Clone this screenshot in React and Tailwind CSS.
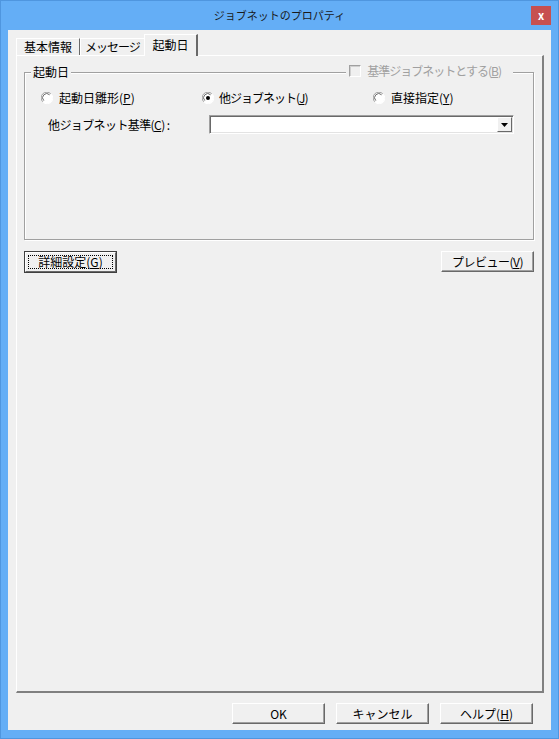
import React from 'react';

const Radio = ({ checked }) => (
    <svg width="12" height="12" viewBox="0 0 12 12" className="shrink-0">
        <circle cx="6" cy="6" r="5.5" fill="#fff" />
        <path d="M1.8 9.8 A5.2 5.2 0 0 1 9.8 1.8" stroke="#a0a0a0" strokeWidth="1" fill="none" />
        <path d="M2.8 8.6 A4 4 0 0 1 8.6 2.8" stroke="#696969" strokeWidth="1" fill="none" />
        <path d="M2.2 10.2 A5.3 5.3 0 0 0 10.2 2.2" stroke="#ffffff" strokeWidth="1" fill="none" />
        {checked && <circle cx="6" cy="6" r="2" fill="#000" />}
    </svg>
);

const Btn = ({ children, className = '' }) => (
    <div className={`flex h-[21px] items-center justify-center border border-b-[#696969] border-l-white border-r-[#696969] border-t-white bg-[#f0f0f0] text-[12px] text-black shadow-[inset_-1px_-1px_0_#a0a0a0] ${className}`}>
        {children}
    </div>
);

const App = () => {
    return (
        <div className="flex h-[739px] w-[559px] flex-col border border-[#4f96df] bg-[#64aef6] font-['Noto_Sans_CJK_JP','Noto_Sans',sans-serif] text-[12px] leading-none text-black">
            {/* title bar */}
            <div className="relative flex h-[29px] shrink-0 items-center justify-center">
                <span className="text-[11px] text-[#1a1a1a]">ジョブネットのプロパティ</span>
                <div className="absolute right-[7px] top-[5px] flex h-[19px] w-[20px] items-center justify-center bg-[#c75050] text-[11px] font-bold text-white">
                    x
                </div>
            </div>

            {/* client */}
            <div className="mx-[7px] flex h-[700px] w-[543px] flex-col bg-[#f0f0f0]">
                {/* tab strip */}
                <div className="flex h-[25px] items-end pl-[8px]">
                    <div className="flex h-[17px] w-[64px] items-center justify-center border-l border-t border-l-white border-t-white border-r border-r-[#696969]">
                        基本情報
                    </div>
                    <div className="flex h-[17px] w-[64px] items-center justify-center border-l border-t border-l-white border-t-white tracking-[-1px]">
                        メッセージ
                    </div>
                    <div className="relative z-10 -mb-[1px] flex h-[22px] w-[54px] items-center justify-center border-l border-t border-l-white border-t-white border-r-2 border-r-[#696969] bg-[#f0f0f0] pb-[2px]">
                        起動日
                    </div>
                </div>

                {/* tab panel */}
                <div className="mx-[8px] flex h-[638px] w-[528px] flex-col border-l border-t border-l-white border-t-white border-r-2 border-b-2 border-r-[#808080] border-b-[#808080] px-[7px] pt-[16px]">
                    {/* group box */}
                    <div className="relative h-[168px] w-[510px] border border-[#a0a0a0] shadow-[inset_1px_1px_0_#fff,1px_1px_0_#fff]">
                        <span className="absolute left-[6px] top-[-7px] bg-[#f0f0f0] px-[2px]">起動日</span>
                        <div className="absolute right-[20px] top-[-8px] flex items-center gap-[6px] bg-[#f0f0f0] pl-[3px] pr-[12px] text-[#a0a0a0]">
                            <div className="h-[12px] w-[12px] border border-b-white border-l-[#a0a0a0] border-r-white border-t-[#a0a0a0] bg-[#f0f0f0] shadow-[inset_1px_1px_0_#d0d0d0]" />
                            <span className="tracking-[-1px]">
                                基準ジョブネットとする(<u>B</u>)
                            </span>
                        </div>

                        <div className="flex items-center pl-[16px] pt-[19px]">
                            <div className="flex w-[161px] items-center gap-[6px]">
                                <Radio />
                                <span>
                                    起動日雛形(<u>P</u>)
                                </span>
                            </div>
                            <div className="flex w-[171px] items-center gap-[5px]">
                                <Radio checked />
                                <span className="tracking-[-1px]">
                                    他ジョブネット(<u>J</u>)
                                </span>
                            </div>
                            <div className="flex items-center gap-[6px]">
                                <Radio />
                                <span>
                                    直接指定(<u>Y</u>)
                                </span>
                            </div>
                        </div>

                        <div className="mt-[11px] flex items-center pl-[23px]">
                            <span className="w-[161px] tracking-[-0.6px]">
                                他ジョブネット基準(<u>C</u>) :
                            </span>
                            <div className="flex h-[19px] w-[305px] items-center justify-end border border-b-white border-l-[#a0a0a0] border-r-white border-t-[#a0a0a0] bg-white pr-[1px] shadow-[inset_1px_1px_0_#696969,inset_-1px_-1px_0_#e3e3e3]">
                                <div className="flex h-[15px] w-[15px] items-center justify-center border border-b-[#696969] border-l-white border-r-[#696969] border-t-white bg-[#f0f0f0]">
                                    <svg width="7" height="4" viewBox="0 0 7 4">
                                        <path d="M0 0 H7 L3.5 4 Z" fill="#000" />
                                    </svg>
                                </div>
                            </div>
                        </div>
                    </div>

                    {/* buttons row */}
                    <div className="mt-[11px] flex w-[510px] justify-between">
                        <div className="h-[22px] w-[93px] border border-[#404040]">
                            <div className="flex h-full w-full items-center justify-center border border-b-[#696969] border-l-white border-r-[#696969] border-t-white bg-[#f0f0f0] p-[2px]">
                                <div className="flex h-full w-full items-center justify-center border border-dotted border-black">
                                    詳細設定(<u>G</u>)
                                </div>
                            </div>
                        </div>
                        <Btn className="w-[93px] tracking-[-0.5px]">
                            プレビュー(<u>V</u>)
                        </Btn>
                    </div>
                </div>

                {/* dialog buttons */}
                <div className="mt-[10px] flex justify-end gap-[11px] pr-[18px]">
                    <Btn className="w-[93px]">OK</Btn>
                    <Btn className="w-[93px]">キャンセル</Btn>
                    <Btn className="w-[93px]">
                        ヘルプ(<u>H</u>)
                    </Btn>
                </div>
            </div>
        </div>
    );
};

export default App;
